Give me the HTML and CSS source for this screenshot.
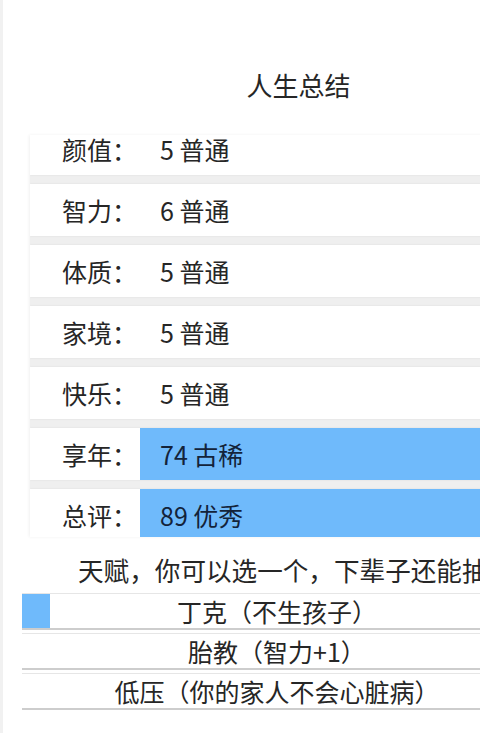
FILE: index.html
```html
<!DOCTYPE html>
<html lang="zh-CN">
<head>
  <meta charset="UTF-8">
  <meta name="viewport" content="width=device-width, initial-scale=1.0">
  <title>人生总结</title>
  <link rel="stylesheet" href="styles.css">
</head>
<body>
  <div class="page">
    <div class="summary-title">人生总结</div>

    <div class="props">
      <div class="prop-list">
        <div class="prop-row">
          <div class="prop-label">颜值：</div>
          <div class="prop-value">5 普通</div>
        </div>
        <div class="prop-row">
          <div class="prop-label">智力：</div>
          <div class="prop-value">6 普通</div>
        </div>
        <div class="prop-row">
          <div class="prop-label">体质：</div>
          <div class="prop-value">5 普通</div>
        </div>
        <div class="prop-row">
          <div class="prop-label">家境：</div>
          <div class="prop-value">5 普通</div>
        </div>
        <div class="prop-row">
          <div class="prop-label">快乐：</div>
          <div class="prop-value">5 普通</div>
        </div>
        <div class="prop-row">
          <div class="prop-label">享年：</div>
          <div class="prop-value grade-good">74 古稀</div>
        </div>
        <div class="prop-row">
          <div class="prop-label">总评：</div>
          <div class="prop-value grade-good">89 优秀</div>
        </div>
      </div>
    </div>

    <div class="talent-tip">天赋，你可以选一个，下辈子还能抽到</div>

    <div class="talent-list">
      <div class="talent-item selected">
        <div class="talent-mark"></div>
        <div class="talent-text">丁克（不生孩子）</div>
      </div>
      <div class="talent-item">
        <div class="talent-mark"></div>
        <div class="talent-text">胎教（智力+1）</div>
      </div>
      <div class="talent-item">
        <div class="talent-mark"></div>
        <div class="talent-text">低压（你的家人不会心脏病）</div>
      </div>
    </div>
  </div>
</body>
</html>
```

FILE: styles.css
```css
html, body {
  margin: 0;
  padding: 0;
  background-color: #fff;
  overflow: hidden;
}

body {
  font-family: "Noto Sans CJK SC", "Noto Sans", sans-serif;
  font-size: 25px;
  color: #262626;
}

.page {
  width: 600px;
  height: 733px;
  border-left: 3px solid #f1f1f1;
}

.summary-title {
  width: 591px;
  padding-top: 68px;
  height: 67px;
  line-height: 34px;
  font-size: 26px;
  text-align: center;
}

/* 属性列表 (已滚动一点) */
.props {
  margin-left: 27px;
  height: 402px;
  overflow: hidden;
  box-shadow: -1px 0 3px rgba(0, 0, 0, 0.06);
}

.prop-list {
  margin-top: -12px;
  display: flex;
  flex-direction: column;
  gap: 9px;
  background-color: #efefef;
}

.prop-row {
  display: grid;
  grid-template-columns: 110px 1fr;
  height: 52px;
  line-height: 52px;
  background-color: #fff;
  box-shadow: 0 0 2px rgba(0, 0, 0, 0.08);
}

.prop-label {
  padding-left: 32px;
  white-space: nowrap;
}

.prop-value {
  padding-left: 20px;
  white-space: nowrap;
}

.grade-good {
  background-color: #6fbafb;
  color: #13233a;
}

/* 天赋 */
.talent-tip {
  padding-top: 13px;
  padding-left: 75px;
  line-height: 40px;
  font-size: 25.6px;
  white-space: nowrap;
}

.talent-list {
  margin-top: 3px;
  margin-left: 19px;
  width: 510px;
}

.talent-item {
  display: grid;
  grid-template-columns: 28px 1fr 28px;
  height: 34px;
  line-height: 34px;
  margin-bottom: 3px;
  border-top: 1px solid #e6e6e6;
  border-bottom: 2px solid #cdcdcd;
}

.talent-text {
  text-align: center;
  white-space: nowrap;
}

.talent-item.selected .talent-mark {
  background-color: #6fbafb;
}
```
